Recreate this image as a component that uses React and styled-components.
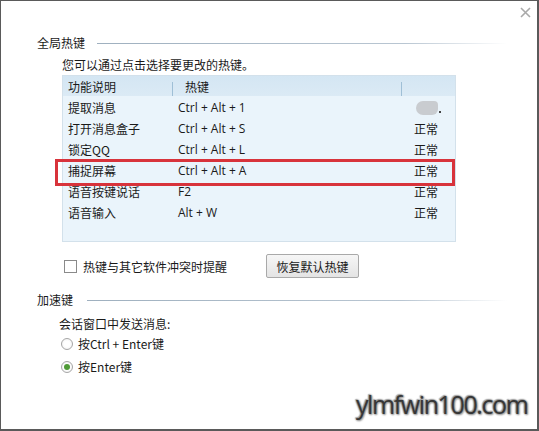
import React from 'react';
import styled, { createGlobalStyle } from 'styled-components';

const GlobalStyle = createGlobalStyle`
  body {
    margin: 0;
    background: #fff;
    font-family: "Noto Sans CJK SC", "Liberation Sans", sans-serif;
    font-size: 12px;
    color: #1a1a1a;
  }
`

const WINDOW = styled.div`
  position: relative;
  box-sizing: border-box;
  width: 539px;
  height: 431px;
  border: 1px solid #5a5a5a;
  border-right-width: 2px;
  border-bottom-width: 2px;
  background: #fff;
  padding-top: 33px;
  overflow: hidden;
`
const CLOSE = styled.svg`
  position: absolute;
  top: 6px;
  right: 6px;
`
const SECTIONHEAD = styled.div`
  display: flex;
  align-items: center;
  height: 18px;
  padding-left: 36px;
  width: 470px;
`
const SECTIONLABEL = styled.span`
  line-height: 18px;
  margin-right: ${props => props.gap}px;
`
const RULE = styled.div`
  flex: 1;
  height: 1px;
  background: linear-gradient(to right, #9fb0bf 0%, #b9c6d2 75%, rgba(220, 228, 235, 0) 100%);
`
const HINT = styled.div`
  margin: 4px 0 0 61px;
  line-height: 17px;
`
const TABLE = styled.div`
  box-sizing: border-box;
  margin: 2px 0 0 61px;
  width: 394px;
  height: 167px;
  border: 1px solid #d3e1eb;
  background: #eaf4fb;
  display: grid;
  grid-template-columns: 109px 229px 1fr;
  grid-auto-rows: 21px;
  align-content: start;
`
const HEADCELL = styled.div`
  display: flex;
  align-items: center;
  height: 20px;
  padding-left: ${props => props.pad}px;
  background: linear-gradient(to bottom, #d4e6f3, #dbeaf5);
  border-left: ${props => props.sep ? '1px solid #9fbfd6' : 'none'};
  background-clip: padding-box;
  position: relative;
  &::before {
    content: '';
    display: ${props => props.sep ? 'block' : 'none'};
    position: absolute;
    left: -1px;
    top: 0;
    width: 1px;
    height: 6px;
    background: #d5e7f3;
  }
`
const ROW = styled.div`
  display: contents;
`
const CELL = styled.div`
  display: flex;
  align-items: center;
  line-height: 21px;
  padding-left: ${props => props.pad || 0}px;
  padding-right: ${props => props.right || 0}px;
  justify-content: ${props => props.end ? 'flex-end' : 'flex-start'};
  position: relative;
  font-family: ${props => props.latin ? '"Open Sans", "Noto Sans CJK SC", sans-serif' : 'inherit'};
`
const HIGHLIGHT = styled.div`
  position: absolute;
  left: -8px;
  top: -1px;
  width: 394px;
  height: 21px;
  border: 3px solid #d8333b;
  pointer-events: none;
`
const BLOB = styled.span`
  display: inline-block;
  width: 22px;
  height: 14px;
  border-radius: 7px 4px 6px 7px;
  background: #c9ccd0;
  position: relative;
  &::after {
    content: '';
    position: absolute;
    right: -3px;
    bottom: 2px;
    width: 2px;
    height: 2px;
    background: #444;
  }
`
const OPTIONS = styled.div`
  display: flex;
  align-items: center;
  margin: 12px 0 0 63px;
  height: 24px;
`
const CHECK = styled.span`
  box-sizing: border-box;
  width: 13px;
  height: 13px;
  border: 1px solid #8a8a8a;
  background: #fff;
  margin-right: 6px;
`
const CHECKLABEL = styled.span`
  width: 183px;
`
const BUTTON = styled.button`
  box-sizing: border-box;
  width: 93px;
  height: 24px;
  border: 1px solid #a9a9a9;
  border-radius: 2px;
  background: linear-gradient(to bottom, #f6f6f6, #e4e4e4);
  font-family: "Noto Sans CJK SC", sans-serif;
  font-size: 12px;
  color: #1a1a1a;
  padding: 0;
`
const SECTION2 = styled.div`
  margin-top: 13px;
`
const SUBTITLE = styled.div`
  margin: 6px 0 0 58px;
  line-height: 17px;
`
const RADIOROW = styled.div`
  display: flex;
  align-items: center;
  margin: ${props => props.first ? 3 : 6}px 0 0 60px;
  height: 17px;
`
const RADIO = styled.span`
  box-sizing: border-box;
  width: 12px;
  height: 12px;
  border-radius: 50%;
  border: 1px solid #a6a6a6;
  background: radial-gradient(circle, #fff 40%, #ececec 100%);
  margin-right: 5px;
  display: flex;
  align-items: center;
  justify-content: center;
  &::after {
    content: '';
    display: ${props => props.checked ? 'block' : 'none'};
    width: 6px;
    height: 6px;
    border-radius: 50%;
    background: #4f9a37;
  }
`
const WATERMARK = styled.div`
  position: absolute;
  left: 355px;
  top: 386px;
  font-family: "Open Sans", "Liberation Sans", sans-serif;
  font-size: 25px;
  letter-spacing: -1.4px;
  color: #363636;
  text-shadow: 0 0 2px #8d8d8d, 0 0 2px #8d8d8d, 1px 1px 2px #9a9a9a, -1px -1px 1px #b0b0b0;
`

const hotkeys = [
  { name: '提取消息', key: 'Ctrl + Alt + 1', blob: true },
  { name: '打开消息盒子', key: 'Ctrl + Alt + S' },
  { name: '锁定QQ', key: 'Ctrl + Alt + L' },
  { name: '捕捉屏幕', key: 'Ctrl + Alt + A', marked: true },
  { name: '语音按键说话', key: 'F2' },
  { name: '语音输入', key: 'Alt + W' },
];

function App() {
  return (
    <WINDOW>
      <GlobalStyle />
      <CLOSE width="11" height="11" viewBox="0 0 11 11">
        <path d="M1 1 L10 10 M10 1 L1 10" stroke="#a9a9a9" strokeWidth="1.6" />
      </CLOSE>
      <SECTIONHEAD>
        <SECTIONLABEL gap={12}>全局热键</SECTIONLABEL>
        <RULE />
      </SECTIONHEAD>
      <HINT>您可以通过点击选择要更改的热键。</HINT>
      <TABLE>
        <HEADCELL pad={5}>功能说明</HEADCELL>
        <HEADCELL pad={12} sep>热键</HEADCELL>
        <HEADCELL sep />
        {hotkeys.map(h => (
          <ROW key={h.name}>
            <CELL pad={5}>
              {h.marked && <HIGHLIGHT />}
              {h.name}
            </CELL>
            <CELL pad={6} latin>{h.key}</CELL>
            <CELL end right={17}>{h.blob ? <BLOB /> : '正常'}</CELL>
          </ROW>
        ))}
      </TABLE>
      <OPTIONS>
        <CHECK />
        <CHECKLABEL>热键与其它软件冲突时提醒</CHECKLABEL>
        <BUTTON>恢复默认热键</BUTTON>
      </OPTIONS>
      <SECTION2>
        <SECTIONHEAD>
          <SECTIONLABEL gap={14}>加速键</SECTIONLABEL>
          <RULE />
        </SECTIONHEAD>
        <SUBTITLE>会话窗口中发送消息:</SUBTITLE>
        <RADIOROW first>
          <RADIO />
          <span>按Ctrl + Enter键</span>
        </RADIOROW>
        <RADIOROW>
          <RADIO checked />
          <span>按Enter键</span>
        </RADIOROW>
      </SECTION2>
      <WATERMARK>ylmfwin100.com</WATERMARK>
    </WINDOW>
  );
}

export default App;
